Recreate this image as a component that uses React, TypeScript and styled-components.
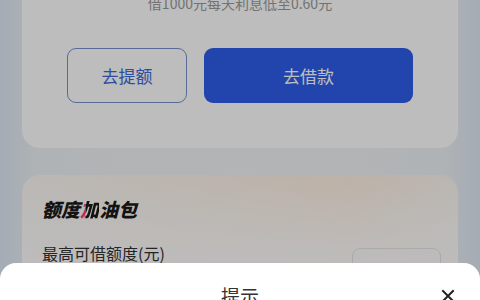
import React from "react";
import styled, { createGlobalStyle } from "styled-components";

const Global = createGlobalStyle`
  html, body { margin: 0; padding: 0; }
  body { font-family: "Noto Sans CJK SC", "Noto Sans", sans-serif; }
`;

const Page = styled.div`
  position: relative;
  width: 480px;
  height: 300px;
  overflow: hidden;
  background: linear-gradient(90deg, #dde8f4 0%, #eef2f6 8%, #f2f3f5 50%, #eef2f6 92%, #dfe8f2 100%);
`;

const Content = styled.div`
  display: flex;
  flex-direction: column;
  gap: 27px;
  margin-top: -50px;
`;

const Card = styled.div`
  margin: 0 22px;
  background: #ffffff;
  border-radius: 18px;
  padding: 43px 45px 45px;
  display: flex;
  flex-direction: column;
  align-items: stretch;
`;

const Hint = styled.div`
  text-align: center;
  font-size: 14px;
  line-height: 20px;
  color: #9a9a9a;
`;

const ButtonRow = styled.div`
  display: flex;
  gap: 17px;
  margin-top: 35px;
`;

const Btn = styled.div<{ $primary?: boolean }>`
  height: 55px;
  box-sizing: border-box;
  border-radius: 9px;
  display: flex;
  align-items: center;
  justify-content: center;
  font-size: 17px;
  ${(p) =>
    p.$primary
      ? `flex: 1; background: #2d5ee8; color: #ffffff;`
      : `width: 120px; border: 1.5px solid #7a90cc; color: #3d68d8; background: #ffffff;`}
`;

const PackCard = styled.div`
  margin: 0 22px;
  height: 200px;
  border-radius: 18px;
  background: linear-gradient(180deg, rgba(255, 255, 255, 0) 0%, #ffffff 40%),
    linear-gradient(90deg, #fdf8f4 0%, #fff0e2 75%, #fdf6f0 100%);
  padding: 21px 20px;
  display: flex;
  flex-direction: column;
`;

const PackTitle = styled.div`
  font-size: 19px;
  line-height: 26px;
  font-weight: 900;
  font-style: italic;
  color: #1a1a1a;
`;

const Accent = styled.span`
  background: linear-gradient(90deg, #ff3c6e 0%, #ff3c6e 34%, #1a1a1a 34%);
  -webkit-background-clip: text;
  background-clip: text;
  color: transparent;
`;

const LimitRow = styled.div`
  display: flex;
  justify-content: space-between;
  align-items: flex-start;
  margin-top: 20px;
`;

const LimitLabel = styled.div`
  font-size: 16px;
  line-height: 22px;
  color: #333333;
`;

const SmallBtn = styled.div`
  width: 89px;
  height: 34px;
  margin-top: 6px;
  margin-right: -3px;
  box-sizing: border-box;
  border: 1px solid #e6e6e6;
  border-radius: 8px;
  display: flex;
  align-items: center;
  justify-content: center;
  font-size: 14px;
  color: #c0c0c0;
  padding-top: 14px;
`;

const Dim = styled.div`
  position: absolute;
  inset: 0;
  background: rgba(0, 0, 0, 0.26);
`;

const Sheet = styled.div`
  position: absolute;
  left: 0;
  right: 0;
  top: 263px;
  height: 120px;
  background: #ffffff;
  border-radius: 16px 16px 0 0;
  padding-top: 20px;
  box-sizing: border-box;
`;

const SheetHeader = styled.div`
  position: relative;
  display: flex;
  justify-content: center;
`;

const SheetTitle = styled.div`
  font-size: 19px;
  line-height: 26px;
  color: #333333;
`;

const Close = styled.div`
  position: absolute;
  right: 25px;
  top: 6px;
  width: 14px;
  height: 14px;
  display: flex;
`;

export default function App() {
  return (
    <>
      <Global />
      <Page>
        <Content>
          <Card>
            <Hint>借1000元每天利息低至0.60元</Hint>
            <ButtonRow>
              <Btn>去提额</Btn>
              <Btn $primary>去借款</Btn>
            </ButtonRow>
          </Card>
          <PackCard>
            <PackTitle>
              额度<Accent>加</Accent>油包
            </PackTitle>
            <LimitRow>
              <LimitLabel>最高可借额度(元)</LimitLabel>
              <SmallBtn>去加油</SmallBtn>
            </LimitRow>
          </PackCard>
        </Content>
        <Dim />
        <Sheet>
          <SheetHeader>
            <SheetTitle>提示</SheetTitle>
            <Close>
              <svg width="14" height="14" viewBox="0 0 14 14">
                <path d="M2 2 L12 12 M12 2 L2 12" stroke="#222" strokeWidth="2" strokeLinecap="square" />
              </svg>
            </Close>
          </SheetHeader>
        </Sheet>
      </Page>
    </>
  );
}
